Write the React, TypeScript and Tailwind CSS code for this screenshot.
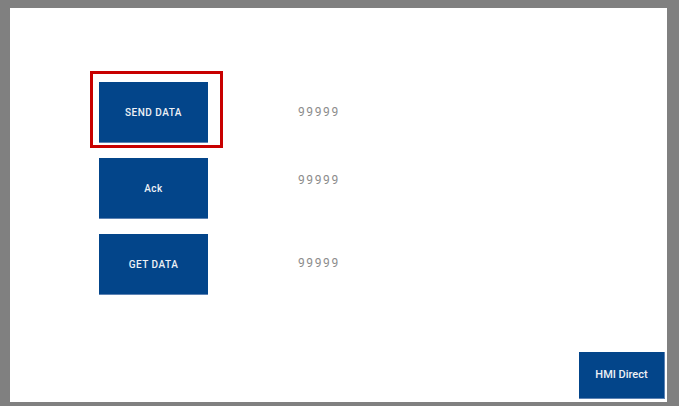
import React from "react";

const font = { fontFamily: "Roboto, 'Liberation Sans', sans-serif" };

function Btn({ label, mt }: { label: string; mt: string }) {
  return (
    <div className="flex items-start">
      <div className="flex h-[61px] w-[109px] items-center justify-center border-b border-[#5d82b3] bg-[#03458a] text-[10px] font-medium tracking-[0.5px] text-[#eef1f6]">
        {label}
      </div>
      <div className={`ml-[90px] text-[12px] leading-[14px] tracking-[1.6px] text-[#8c8c8c] ${mt}`}>99999</div>
    </div>
  );
}

export default function App() {
  return (
    <div className="h-[406px] w-[679px] bg-[#808080] pb-[4px] pl-[10px] pr-[12px] pt-[8px]" style={font}>
      <div className="relative flex h-[394px] w-[657px] flex-col bg-white">
        <div className="pointer-events-none absolute left-[80px] top-[63px] h-[77px] w-[133px] border-[3px] border-[#c80000]" />
        <div className="ml-[89px] mt-[74px] flex flex-col gap-[15px]">
          <Btn label="SEND DATA" mt="mt-[23px]" />
          <Btn label="Ack" mt="mt-[15px]" />
          <Btn label="GET DATA" mt="mt-[22px]" />
        </div>
        <div className="mb-[3px] mr-[2px] mt-auto flex h-[47px] w-[86px] items-center justify-center self-end border-b border-r border-[#5d82b3] bg-[#03458a] text-[11px] font-medium text-[#eef1f6]">
          HMI Direct
        </div>
      </div>
    </div>
  );
}
